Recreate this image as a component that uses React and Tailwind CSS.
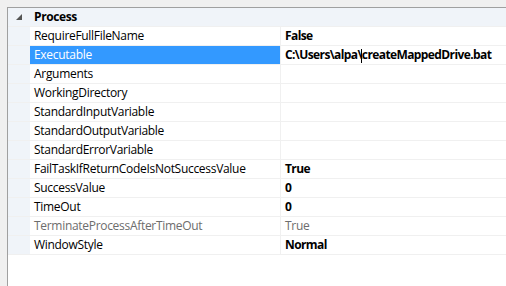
import React from "react";

const rows = [
  { name: "RequireFullFileName", value: "False" },
  { name: "Executable", value: "exe", selected: true },
  { name: "Arguments", value: "" },
  { name: "WorkingDirectory", value: "" },
  { name: "StandardInputVariable", value: "" },
  { name: "StandardOutputVariable", value: "" },
  { name: "StandardErrorVariable", value: "" },
  { name: "FailTaskIfReturnCodeIsNotSuccessValue", value: "True" },
  { name: "SuccessValue", value: "0" },
  { name: "TimeOut", value: "0" },
  { name: "TerminateProcessAfterTimeOut", value: "True", disabled: true },
  { name: "WindowStyle", value: "Normal" },
];

export default function App() {
  return (
    <div className="w-[506px] h-[286px] bg-[#f0f0f0] pt-[7px] pl-[7px] overflow-hidden font-['Open_Sans','Noto_Sans',sans-serif] text-[12px] leading-[18px] tracking-[-0.3px]">
      <div className="w-full h-full border-t border-l border-[#a0a0a0] bg-white">
        <div className="flex h-[19px] bg-[#f0f4f9] border-b border-[#f0f0f0] items-center">
          <div className="w-[22px] flex justify-center items-center">
            <svg width="7" height="7" viewBox="0 0 7 7" className="ml-[1px]">
              <polygon points="6,0 6,6 0,6" fill="#555" />
            </svg>
          </div>
          <span className="pl-[4px] font-bold text-black tracking-[-0.4px]">Process</span>
        </div>
        {rows.map((r) => (
          <div key={r.name} className="flex h-[19px] border-b border-[#f0f0f0]">
            <div className="w-[22px] bg-[#f0f4f9] shrink-0" />
            <div
              className={
                r.selected
                  ? "w-[251px] shrink-0 bg-[#3399ff] text-white pl-[4px] border-r border-[#f0f0f0] whitespace-nowrap overflow-hidden"
                  : r.disabled
                  ? "w-[251px] shrink-0 text-[#6d6d6d] pl-[4px] border-r border-[#f0f0f0] whitespace-nowrap overflow-hidden"
                  : "w-[251px] shrink-0 text-black pl-[4px] border-r border-[#f0f0f0] whitespace-nowrap overflow-hidden"
              }
            >
              {r.name}
            </div>
            <div
              className={
                r.disabled
                  ? "pl-[4px] text-[#6d6d6d] whitespace-nowrap"
                  : "pl-[4px] font-bold text-black whitespace-nowrap tracking-[-0.6px]"
              }
            >
              {r.value === "exe" ? (
                <span className="relative">
                  C:\Users\alpa\
                  <span className="inline-block w-[1px] h-[14px] bg-black align-middle -ml-[1px]" />
                  createMappedDrive.bat
                </span>
              ) : (
                r.value
              )}
            </div>
          </div>
        ))}
      </div>
    </div>
  );
}
